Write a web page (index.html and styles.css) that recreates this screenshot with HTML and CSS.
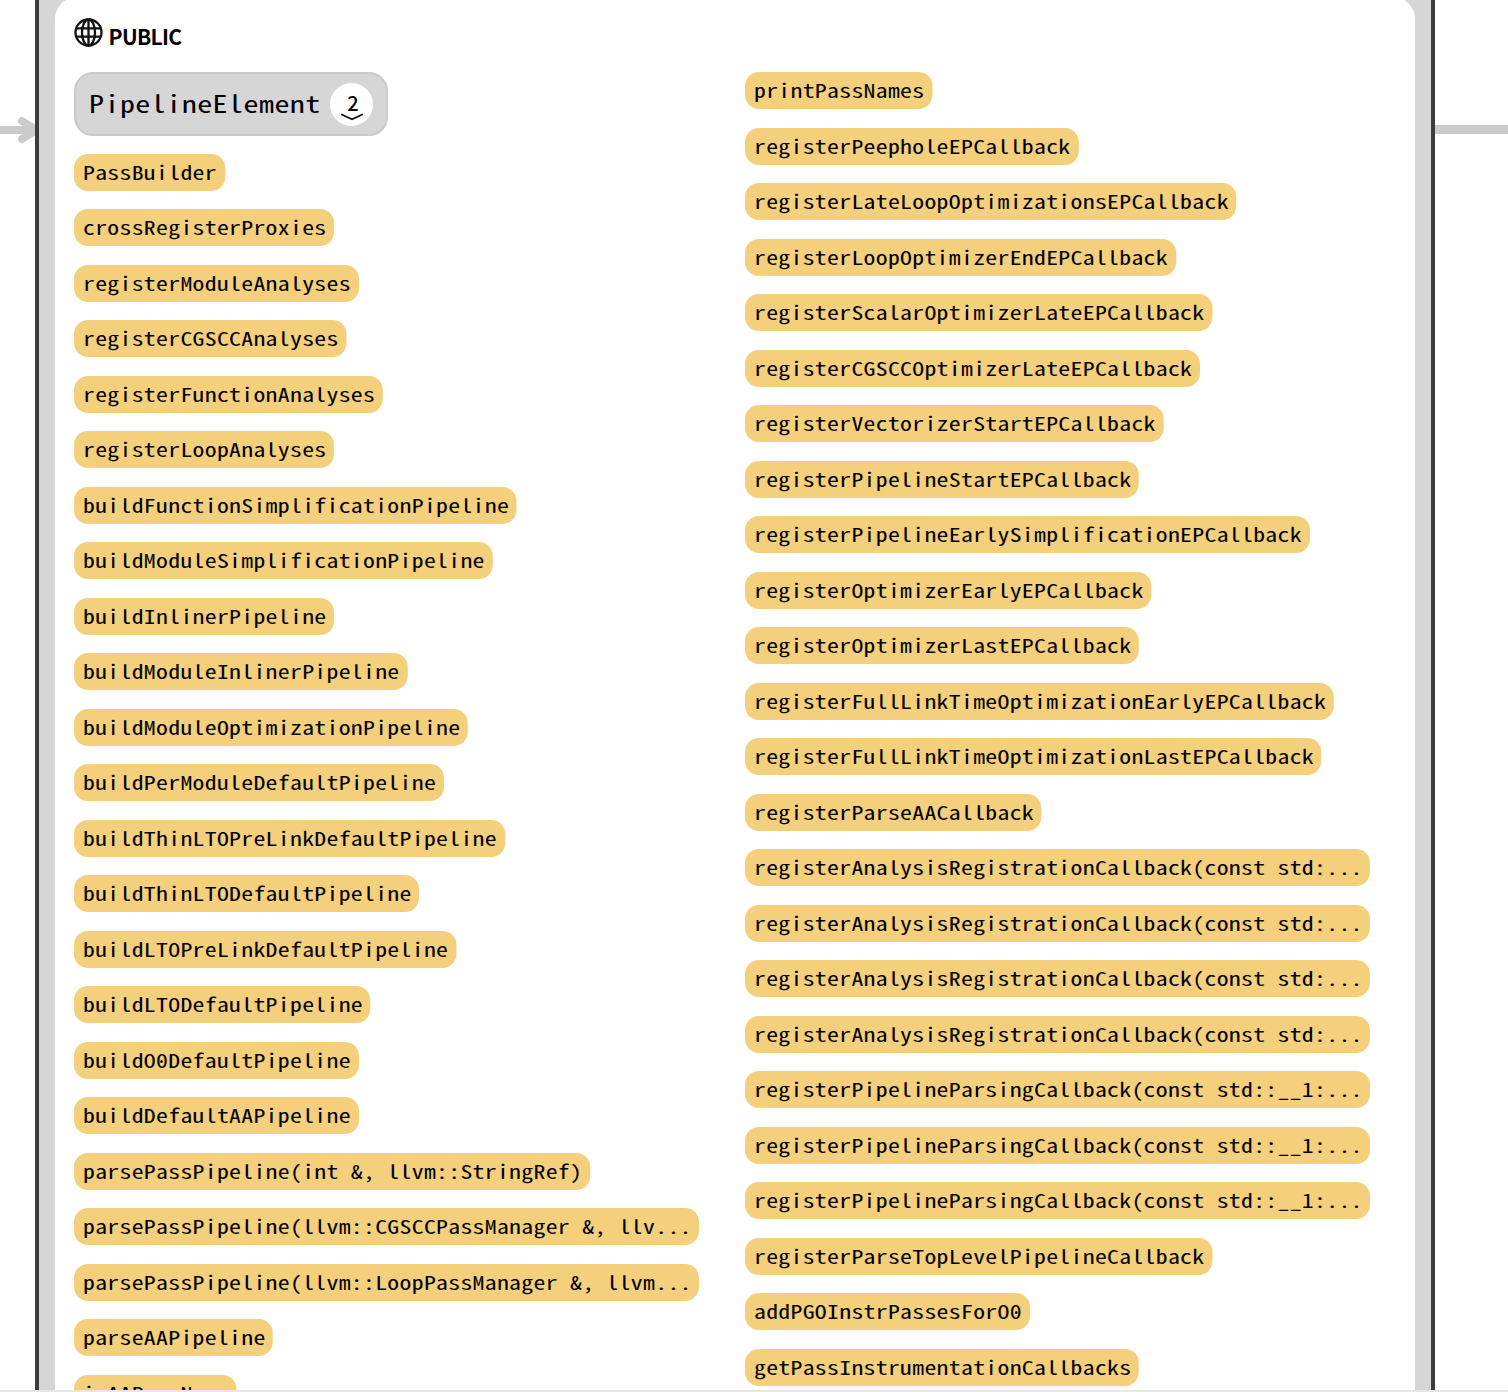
FILE: index.html
```
<!DOCTYPE html>
<html lang="en">
<head>
<meta charset="utf-8">
<title>PassBuilder</title>
<link rel="stylesheet" href="styles.css">
</head>
<body>
<main class="canvas">
  <div class="gutter gutter-in">
    <svg class="arrow" width="36" height="32" viewBox="0 0 36 32"><path d="M0 17H34M22 8L36 17L22 26" fill="none" stroke="#cbcbcb" stroke-width="8" stroke-linecap="round" stroke-linejoin="round"/></svg>
  </div>
  <section class="node">
    <div class="card">
      <header class="access">
        <svg class="globe" width="29" height="29" viewBox="0 0 29 29"><g fill="none" stroke="#111" stroke-width="2.3"><circle cx="14.5" cy="14.5" r="13"/><ellipse cx="14.5" cy="14.5" rx="6.5" ry="13"/><path d="M14.5 1.4V27.6M2.5 10.3H26.5M2.5 18.7H26.5"/></g></svg>
        <h1 class="access-name">PUBLIC</h1>
      </header>
      <div class="columns">
        <div class="column">
          <div class="group"><span class="group-name">PipelineElement</span><span class="badge"><span class="count">2</span><svg class="chevron" width="24" height="8" viewBox="0 0 24 8"><path d="M1.2 1.2L12 6.3L22.8 1.2" fill="none" stroke="#111" stroke-width="1.8"/></svg></span></div>
          <span class="pill">PassBuilder</span>
          <span class="pill">crossRegisterProxies</span>
          <span class="pill">registerModuleAnalyses</span>
          <span class="pill">registerCGSCCAnalyses</span>
          <span class="pill">registerFunctionAnalyses</span>
          <span class="pill">registerLoopAnalyses</span>
          <span class="pill">buildFunctionSimplificationPipeline</span>
          <span class="pill">buildModuleSimplificationPipeline</span>
          <span class="pill">buildInlinerPipeline</span>
          <span class="pill">buildModuleInlinerPipeline</span>
          <span class="pill">buildModuleOptimizationPipeline</span>
          <span class="pill">buildPerModuleDefaultPipeline</span>
          <span class="pill">buildThinLTOPreLinkDefaultPipeline</span>
          <span class="pill">buildThinLTODefaultPipeline</span>
          <span class="pill">buildLTOPreLinkDefaultPipeline</span>
          <span class="pill">buildLTODefaultPipeline</span>
          <span class="pill">buildO<span class="zero">0</span>DefaultPipeline</span>
          <span class="pill">buildDefaultAAPipeline</span>
          <span class="pill">parsePassPipeline(int &amp;, llvm::StringRef)</span>
          <span class="pill">parsePassPipeline(llvm::CGSCCPassManager &amp;, llv...</span>
          <span class="pill">parsePassPipeline(llvm::LoopPassManager &amp;, llvm...</span>
          <span class="pill">parseAAPipeline</span>
          <span class="pill">isAAPassName</span>
        </div>
        <div class="column">
          <span class="pill">printPassNames</span>
          <span class="pill">registerPeepholeEPCallback</span>
          <span class="pill">registerLateLoopOptimizationsEPCallback</span>
          <span class="pill">registerLoopOptimizerEndEPCallback</span>
          <span class="pill">registerScalarOptimizerLateEPCallback</span>
          <span class="pill">registerCGSCCOptimizerLateEPCallback</span>
          <span class="pill">registerVectorizerStartEPCallback</span>
          <span class="pill">registerPipelineStartEPCallback</span>
          <span class="pill">registerPipelineEarlySimplificationEPCallback</span>
          <span class="pill">registerOptimizerEarlyEPCallback</span>
          <span class="pill">registerOptimizerLastEPCallback</span>
          <span class="pill">registerFullLinkTimeOptimizationEarlyEPCallback</span>
          <span class="pill">registerFullLinkTimeOptimizationLastEPCallback</span>
          <span class="pill">registerParseAACallback</span>
          <span class="pill">registerAnalysisRegistrationCallback(const std:...</span>
          <span class="pill">registerAnalysisRegistrationCallback(const std:...</span>
          <span class="pill">registerAnalysisRegistrationCallback(const std:...</span>
          <span class="pill">registerAnalysisRegistrationCallback(const std:...</span>
          <span class="pill">registerPipelineParsingCallback(const std::__1:...</span>
          <span class="pill">registerPipelineParsingCallback(const std::__1:...</span>
          <span class="pill">registerPipelineParsingCallback(const std::__1:...</span>
          <span class="pill">registerParseTopLevelPipelineCallback</span>
          <span class="pill">addPGOInstrPassesForO<span class="zero">0</span></span>
          <span class="pill">getPassInstrumentationCallbacks</span>
        </div>
      </div>
    </div>
  </section>
  <div class="gutter gutter-out"><div class="edge"></div></div>
</main>
</body>
</html>
```
FILE: styles.css
```
* { box-sizing: border-box; }
body { margin: 0; background: #fff; color: #000; overflow: hidden; }
.canvas {
  display: grid;
  grid-template-columns: 35px 1400.4px 1fr;
  height: 1392px;
  overflow: hidden;
  border-bottom: 2px solid #e7e7e7;
}
.gutter-in { padding-top: 113px; }
.arrow { display: block; }
.gutter-out { padding-top: 125px; }
.edge { height: 9px; background: #cbcbcb; }
.node {
  min-height: 0;
  overflow: hidden;
  background: #d6d6d6;
  border: solid #3d3d3d;
  border-width: 0 4px;
  padding: 0 16.4px 0 16px;
}
.card {
  height: 1420px;
  margin-top: -3px;
  padding: 19px 0 0 18.6px;
  background: #fff;
  border-radius: 22px;
}
.access { display: flex; height: 56px; gap: 6px; }
.globe { flex: none; margin-top: 1.5px; }
.access-name {
  margin: 4px 0 0;
  font: bold 21px/32px "Noto Sans CJK SC", sans-serif;
  letter-spacing: -0.7px;
}
.columns { display: grid; grid-template-columns: 671.6px 1fr; }
.column {
  display: flex;
  flex-direction: column;
  align-items: flex-start;
  gap: 18.52px;
  font-family: "Noto Sans Mono CJK SC", "DejaVu Sans Mono", monospace;
}
.group {
  display: flex;
  align-items: center;
  width: 314.8px;
  height: 64px;
  margin-bottom: -1px;
  padding: 0 13.4px;
  gap: 10.8px;
  background: #d6d6d6;
  border: 2px solid #cacaca;
  border-radius: 19px;
}
.group-name {
  width: 232px;
  margin-top: -4px;
  font-size: 24px;
  letter-spacing: 0.36px;
  white-space: nowrap;
  transform: scaleX(1.25);
  transform-origin: 0 50%;
}
.badge {
  flex: none;
  display: flex;
  flex-direction: column;
  align-items: center;
  width: 43px;
  height: 43px;
  padding: 8px 0 0 0;
  border-radius: 50%;
  background: #fff;
}
.count { padding-left: 3px; font: 500 20px/24px "Noto Sans CJK SC", sans-serif; }
.chevron { margin-top: -2px; }
.pill {
  height: 37px;
  padding: 0 6.2px 0 7.2px;
  border-radius: 11.2px / 14px;
  background: #f4cf7c;
  font-size: 19px;
  line-height: 35px;
  letter-spacing: 0.24px;
  white-space: pre;
  transform: scaleX(1.25);
  transform-origin: 0 50%;
}
/* Dotted zero, to tell it from the letter O. */
.zero { position: relative; }
.zero::after {
  content: "";
  position: absolute;
  left: 3.8px;
  top: 50%;
  width: 2px;
  height: 3px;
  margin-top: 0.5px;
  border-radius: 50%;
  background: #000;
}
```
